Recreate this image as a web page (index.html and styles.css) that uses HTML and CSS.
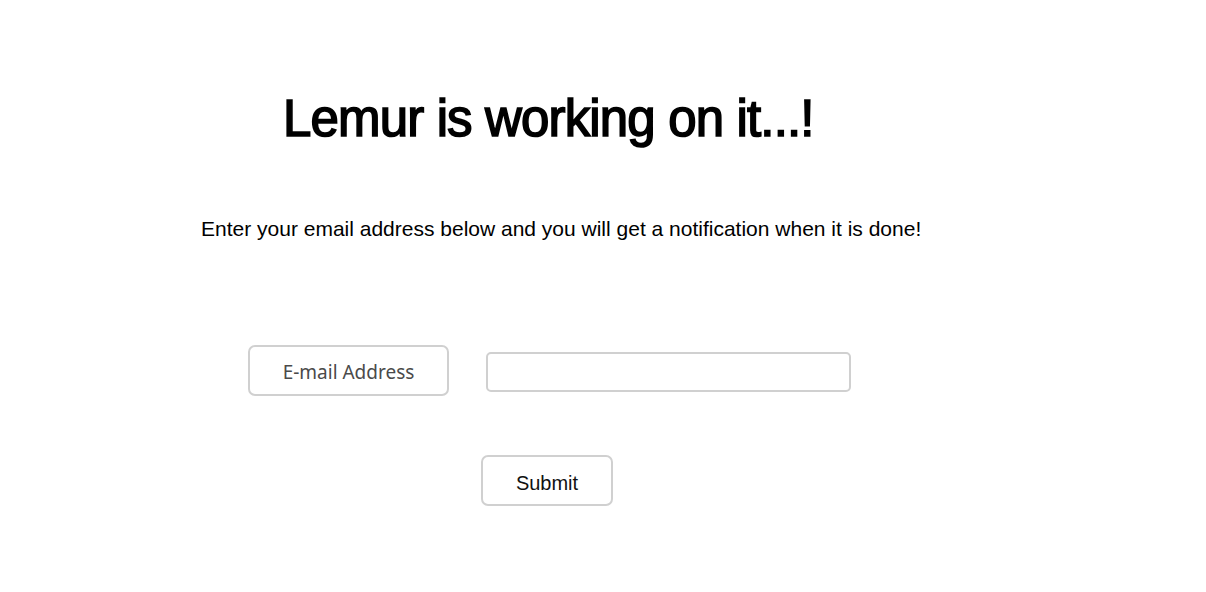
FILE: index.html
```html
<!DOCTYPE html>
<html>
<head>
<meta charset="utf-8">
<link rel="stylesheet" href="styles.css">
</head>
<body>
<main class="page">
  <h1 class="title">Lemur is working on it...!</h1>
  <p class="subtitle">Enter your email address below and you will get a notification when it is done!</p>
  <form class="form">
    <div class="row">
      <span class="label">E-mail Address</span>
      <input class="email" type="text">
    </div>
    <button class="submit" type="button">Submit</button>
  </form>
</main>
</body>
</html>
```
FILE: styles.css
```css
html, body {
  margin: 0;
  padding: 0;
  background: #fff;
}
.page {
  display: flex;
  flex-direction: column;
  align-items: flex-start;
  font-family: "Liberation Sans", Arial, sans-serif;
  color: #000;
}
.title {
  margin: 89px 0 0 283px;
  font-size: 51px;
  font-weight: normal;
  line-height: 60px;
  letter-spacing: -0.85px;
  -webkit-text-stroke: 1.6px #000;
}
.subtitle {
  margin: 67px 0 0 201px;
  font-size: 21px;
  line-height: 26px;
  letter-spacing: 0;
}
.form {
  display: flex;
  flex-direction: column;
  align-items: flex-start;
  margin: 103px 0 0 0;
}
.row {
  display: flex;
  align-items: center;
  gap: 37px;
  margin-left: 248px;
}
.label {
  box-sizing: border-box;
  width: 201px;
  height: 51px;
  border: 2px solid #d0d0d0;
  border-radius: 7px;
  display: flex;
  align-items: center;
  justify-content: center;
  padding-top: 2px;
  font-family: "Noto Sans", "Open Sans", sans-serif;
  font-size: 19px;
  color: #4a4a4a;
}
.email {
  box-sizing: border-box;
  width: 365px;
  height: 40px;
  border: 2px solid #d0d0d0;
  border-radius: 5px;
  margin: 3px 0 0 0;
  padding: 0 6px;
  outline: none;
}
.submit {
  box-sizing: border-box;
  margin: 59px 0 0 481px;
  width: 132px;
  height: 51px;
  border: 2px solid #d0d0d0;
  border-radius: 7px;
  background: #fff;
  font-family: "Liberation Sans", Arial, sans-serif;
  font-size: 20px;
  color: #111;
  padding: 5px 0 0 0;
}
```
